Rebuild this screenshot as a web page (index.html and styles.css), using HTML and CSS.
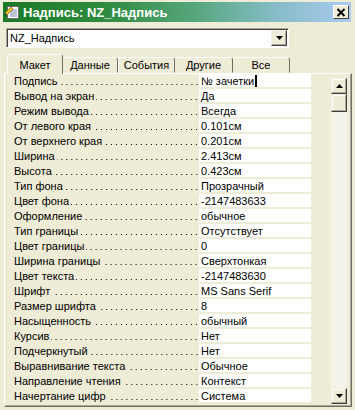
FILE: index.html
```html
<!DOCTYPE html>
<html>
<head>
<meta charset="utf-8">
<link rel="stylesheet" href="styles.css">
</head>
<body>
<div class="win">
  <div class="title">
    <svg class="ticon" width="16" height="16" viewBox="0 0 16 16">
      <rect x="3.5" y="2.5" width="11" height="12" fill="#fff" stroke="#6b6b6b"/>
      <path d="M6 6h7M6 8h7M6 10h7M6 12h7" stroke="#7a8aa8" stroke-width="1"/>
      <path d="M1 9 L7 3 L9 5 L3 11 Z" fill="#f2c230" stroke="#8a6a10" stroke-width="0.8"/>
      <path d="M1 9 L3 11 L0.5 11.5 Z" fill="#333"/>
    </svg>
    <span class="ttext">Надпись: NZ_Надпись</span>
    <div class="close">
      <svg width="10" height="9" viewBox="0 0 10 9"><path d="M1.5 1 L8.5 8 M8.5 1 L1.5 8" stroke="#000" stroke-width="2"/></svg>
    </div>
  </div>
  <div class="combo">
    <span class="ctext">NZ_Надпись</span>
    <div class="cbtn"><svg width="7" height="4" viewBox="0 0 7 4"><path d="M0 0h7L3.5 4z" fill="#000"/></svg></div>
  </div>
  <div class="tabs">
    <div class="tab sel">Макет</div>
    <div class="tab t2">Данные</div>
    <div class="tab t3">События</div>
    <div class="tab t4">Другие</div>
    <div class="tab t5">Все</div>
  </div>
  <div class="panel">
    <div class="list">
      <div class="row"><div class="lab"><span>Подпись</span><i></i></div><div class="val">№ зачетки<span class="caret"></span></div></div>
      <div class="row"><div class="lab"><span>Вывод на экран</span><i></i></div><div class="val">Да</div></div>
      <div class="row"><div class="lab"><span>Режим вывода</span><i></i></div><div class="val">Всегда</div></div>
      <div class="row"><div class="lab"><span>От левого края</span><i></i></div><div class="val">0.101см</div></div>
      <div class="row"><div class="lab"><span>От верхнего края</span><i></i></div><div class="val">0.201см</div></div>
      <div class="row"><div class="lab"><span>Ширина</span><i></i></div><div class="val">2.413см</div></div>
      <div class="row"><div class="lab"><span>Высота</span><i></i></div><div class="val">0.423см</div></div>
      <div class="row"><div class="lab"><span>Тип фона</span><i></i></div><div class="val">Прозрачный</div></div>
      <div class="row"><div class="lab"><span>Цвет фона</span><i></i></div><div class="val">-2147483633</div></div>
      <div class="row"><div class="lab"><span>Оформление</span><i></i></div><div class="val">обычное</div></div>
      <div class="row"><div class="lab"><span>Тип границы</span><i></i></div><div class="val">Отсутствует</div></div>
      <div class="row"><div class="lab"><span>Цвет границы</span><i></i></div><div class="val">0</div></div>
      <div class="row"><div class="lab"><span>Ширина границы</span><i></i></div><div class="val">Сверхтонкая</div></div>
      <div class="row"><div class="lab"><span>Цвет текста</span><i></i></div><div class="val">-2147483630</div></div>
      <div class="row"><div class="lab"><span>Шрифт</span><i></i></div><div class="val">MS Sans Serif</div></div>
      <div class="row"><div class="lab"><span>Размер шрифта</span><i></i></div><div class="val">8</div></div>
      <div class="row"><div class="lab"><span>Насыщенность</span><i></i></div><div class="val">обычный</div></div>
      <div class="row"><div class="lab"><span>Курсив</span><i></i></div><div class="val">Нет</div></div>
      <div class="row"><div class="lab"><span>Подчеркнутый</span><i></i></div><div class="val">Нет</div></div>
      <div class="row"><div class="lab"><span>Выравнивание текста</span><i></i></div><div class="val">Обычное</div></div>
      <div class="row"><div class="lab"><span>Направление чтения</span><i></i></div><div class="val">Контекст</div></div>
      <div class="row"><div class="lab"><span>Начертание цифр</span><i></i></div><div class="val">Система</div></div>
    </div>
    <div class="sb">
      <div class="sbtn"><svg width="7" height="4" viewBox="0 0 7 4"><path d="M3.5 0L7 4H0z" fill="#000"/></svg></div>
      <div class="thumb"></div>
      <div class="track"></div>
      <div class="sbtn"><svg width="7" height="4" viewBox="0 0 7 4"><path d="M0 0h7L3.5 4z" fill="#000"/></svg></div>
    </div>
  </div>
</div>
</body>
</html>
```

FILE: styles.css
```css
* { box-sizing: border-box; }
html, body { margin: 0; padding: 0; }
body {
  width: 355px;
  height: 410px;
  overflow: hidden;
  background: #eeebd6;
  font-family: "Liberation Sans", Arial, sans-serif;
  font-size: 11px;
  color: #000;
}
.win {
  width: 355px;
  height: 410px;
  padding-top: 2px;
  display: flex;
  flex-direction: column;
}
.title {
  height: 20px;
  margin: 0 4px 0 3px;
  background: linear-gradient(90deg, #1a7a26 0%, #2f8c40 30%, #56a67c 55%, #86bcc6 78%, #a9cbf0 100%);
  display: flex;
  align-items: center;
  padding-left: 1px;
}
.ticon { flex: none; }
.ttext {
  margin-left: 3px;
  color: #fff;
  font-weight: bold;
  font-size: 13px;
}
.close {
  margin-left: auto;
  margin-right: 2px;
  width: 16px;
  height: 14px;
  background: #eeebd6;
  border: 1px solid;
  border-color: #fff #404040 #404040 #fff;
  display: flex;
  align-items: center;
  justify-content: center;
}
.combo {
  margin: 6px 0 0 6px;
  width: 283px;
  height: 20px;
  background: #fff;
  border-top: 1px solid #aca899;
  border-left: 1px solid #aca899;
  border-right: 1px solid #fff;
  border-bottom: 1px solid #fff;
  box-shadow: inset 1px 1px 0 #404040;
  display: flex;
  align-items: center;
}
.ctext { padding-left: 3px; flex: 1; }
.cbtn {
  width: 16px;
  height: 16px;
  margin-right: 1px;
  background: #eeebd6;
  border: 1px solid;
  border-color: #f1efe2 #404040 #404040 #f1efe2;
  box-shadow: inset -1px -1px 0 #aca899;
  display: flex;
  align-items: center;
  justify-content: center;
}
.tabs {
  margin: 6px 0 0 7px;
  height: 19px;
  display: flex;
  align-items: flex-end;
  position: relative;
  z-index: 1;
}
.tab {
  height: 16px;
  border: 1px solid;
  border-color: #fff #716f64 transparent #fff;
  border-radius: 2px 3px 0 0;
  display: flex;
  align-items: center;
  justify-content: center;
}
.tab.sel {
  width: 56px;
  height: 20px;
  margin-bottom: -1px;
  background: #eeebd6;
  border-bottom: none;
  padding-top: 1px;
}
.t2 { width: 55px; border-left: none; }
.t3 { width: 57px; border-left-color: #fff; }
.t4 { width: 58px; border-left: none; }
.t5 { width: 57px; border-left: none; }
.panel {
  margin: 0 3px 3px 4px;
  flex: 1;
  border: 1px solid;
  border-color: #fff #716f64 #716f64 #fff;
  box-shadow: inset -1px -1px 0 #aca899;
  display: flex;
}
.list {
  margin-left: 7px;
  width: 299px;
  display: flex;
  flex-direction: column;
}
.row {
  height: 15px;
  display: flex;
}
.lab {
  width: 187px;
  height: 13px;
  padding-left: 2px;
  display: flex;
  align-items: center;
  white-space: nowrap;
}
.lab i {
  flex: 1;
  height: 13px;
  margin-left: 2px;
  margin-right: 1px;
  background-image: linear-gradient(90deg, transparent 3px, #000 3px, #000 4px, transparent 4px);
  background-size: 5px 1px;
  background-repeat: repeat-x;
  background-position: right 0 top 10px;
}
.val {
  width: 112px;
  height: 13px;
  background: #fff;
  padding-left: 2px;
  display: flex;
  align-items: center;
  white-space: nowrap;
}
.caret {
  width: 2px;
  height: 12px;
  background: #000;
  margin-left: 1px;
}
.sb {
  margin: 4px 0 2px 20px;
  width: 16px;
  display: flex;
  flex-direction: column;
  background: #f4f3ea;
}
.sbtn, .thumb {
  height: 16px;
  background: #eeebd6;
  border: 1px solid;
  border-color: #f1efe2 #404040 #404040 #f1efe2;
  box-shadow: inset -1px -1px 0 #aca899, inset 1px 1px 0 #fff;
  display: flex;
  align-items: center;
  justify-content: center;
}
.thumb { height: 18px; }
.track { flex: 1; }
```
